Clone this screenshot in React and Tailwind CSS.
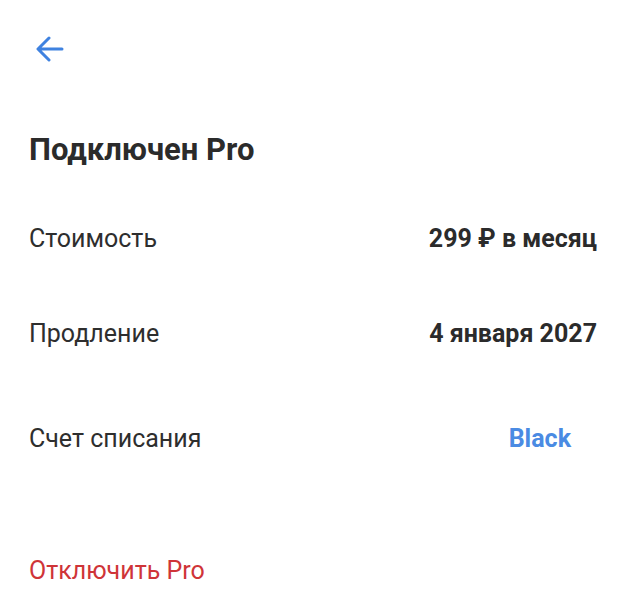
import React from "react";

const font = { fontFamily: "Roboto, 'Noto Sans', sans-serif" };

function Row({ label, children, className = "" }) {
  return (
    <div className={"flex items-center justify-between " + className}>
      <span className="text-[25px] leading-[28px] text-[#2e2e2e]">{label}</span>
      {children}
    </div>
  );
}

export default function App() {
  return (
    <div className="min-h-[600px] bg-white pl-[29px] pr-[26px] pt-[36px]" style={font}>
      <svg width="28" height="26" viewBox="0 0 28 26" className="ml-[7px] block" fill="none"
        stroke="#3f82e0" strokeWidth="3" strokeLinecap="round" strokeLinejoin="round">
        <path d="M26 13H2.5M13 2L2 13l11 11" />
      </svg>

      <h1 className="mt-[70px] text-[31px] leading-[36px] font-bold text-[#2b2b2b]">Подключен Pro</h1>

      <Row label="Стоимость" className="mt-[57px]">
        <span className="text-[25px] leading-[28px] font-bold text-[#2b2b2b]">299 ₽ в месяц</span>
      </Row>
      <Row label="Продление" className="mt-[67px]">
        <span className="text-[25px] leading-[28px] font-bold text-[#2b2b2b]">4 января 2027</span>
      </Row>
      <Row label="Счет списания" className="mt-[77px]">
        <button className="mr-[26px] text-[25px] leading-[28px] font-bold text-[#4a8be3]">Black</button>
      </Row>

      <button className="mt-[104px] block text-[25px] leading-[28px] text-[#cf3438]">Отключить Pro</button>
    </div>
  );
}
